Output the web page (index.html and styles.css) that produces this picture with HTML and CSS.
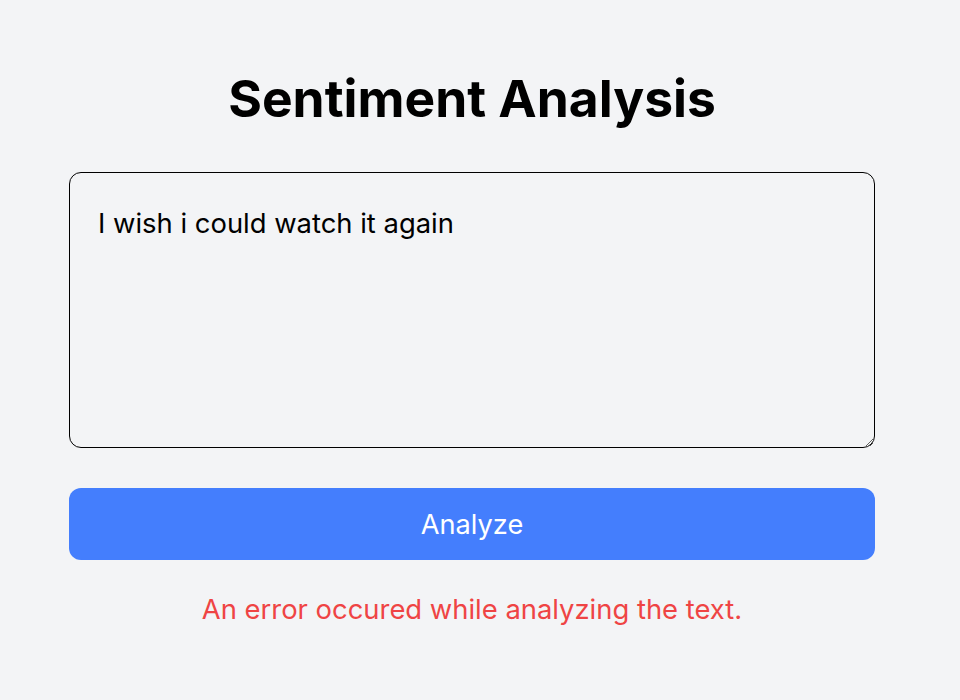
FILE: index.html
```html
<!DOCTYPE html>
<html lang="en">
<head>
<meta charset="utf-8">
<title>Sentiment Analysis</title>
<link rel="stylesheet" href="styles.css">
</head>
<body>
<main class="app">
  <h1 class="title">Sentiment Analysis</h1>
  <textarea class="input">I wish i could watch it again</textarea>
  <button class="analyze" type="button">Analyze</button>
  <p class="error">An error occured while analyzing the text.</p>
</main>
</body>
</html>
```
FILE: styles.css
```css
html, body {
  margin: 0;
  padding: 0;
  background: #f3f4f6;
}
body {
  font-family: Inter, "Noto Sans", sans-serif;
  color: #000;
}
.app {
  box-sizing: border-box;
  width: 806px;
  margin-left: 69px;
  padding-top: 66px;
  display: flex;
  flex-direction: column;
}
.title {
  margin: 0;
  text-align: center;
  font-size: 51.5px;
  font-weight: 700;
  line-height: 64px;
}
.input {
  box-sizing: border-box;
  margin-top: 42px;
  width: 806px;
  height: 276px;
  border: 1px solid #000;
  border-radius: 12px;
  background: #f3f4f6;
  padding: 30px 28px;
  font-family: Inter, "Noto Sans", sans-serif;
  font-size: 27.4px;
  line-height: 41px;
  color: #000;
  resize: vertical;
  outline: none;
}
.analyze {
  margin-top: 40px;
  height: 72px;
  width: 806px;
  border: none;
  border-radius: 12px;
  background: #447efd;
  color: #fff;
  font-family: Inter, "Noto Sans", sans-serif;
  font-size: 27.2px;
  cursor: pointer;
}
.error {
  margin: 29px 0 0;
  text-align: center;
  color: #ef4444;
  font-size: 27.4px;
  line-height: 41px;
}
```
